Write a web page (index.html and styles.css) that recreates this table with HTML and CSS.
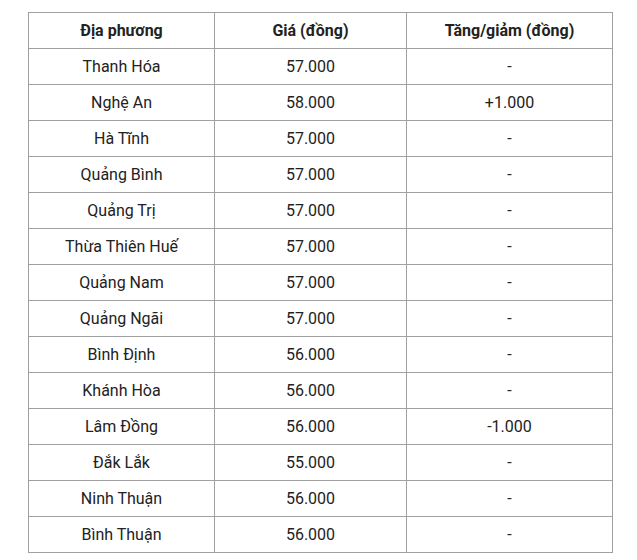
FILE: index.html
```html
<!DOCTYPE html>
<html lang="vi">
<head>
<meta charset="utf-8">
<link rel="stylesheet" href="styles.css">
</head>
<body>
<table class="price">
  <colgroup><col class="c1"><col class="c2"><col class="c3"></colgroup>
  <thead>
    <tr><th>Địa phương</th><th>Giá (đồng)</th><th>Tăng/giảm (đồng)</th></tr>
  </thead>
  <tbody>
    <tr><td>Thanh Hóa</td><td>57.000</td><td>-</td></tr>
    <tr><td>Nghệ An</td><td>58.000</td><td>+1.000</td></tr>
    <tr><td>Hà Tĩnh</td><td>57.000</td><td>-</td></tr>
    <tr><td>Quảng Bình</td><td>57.000</td><td>-</td></tr>
    <tr><td>Quảng Trị</td><td>57.000</td><td>-</td></tr>
    <tr><td>Thừa Thiên Huế</td><td>57.000</td><td>-</td></tr>
    <tr><td>Quảng Nam</td><td>57.000</td><td>-</td></tr>
    <tr><td>Quảng Ngãi</td><td>57.000</td><td>-</td></tr>
    <tr><td>Bình Định</td><td>56.000</td><td>-</td></tr>
    <tr><td>Khánh Hòa</td><td>56.000</td><td>-</td></tr>
    <tr><td>Lâm Đồng</td><td>56.000</td><td>-1.000</td></tr>
    <tr><td>Đắk Lắk</td><td>55.000</td><td>-</td></tr>
    <tr><td>Ninh Thuận</td><td>56.000</td><td>-</td></tr>
    <tr><td>Bình Thuận</td><td>56.000</td><td>-</td></tr>
  </tbody>
</table>
</body>
</html>
```
FILE: styles.css
```css
html, body {
  margin: 0;
  padding: 0;
  background: #fff;
}
body {
  padding: 12px 0 0 28px;
  font-family: Roboto, "Liberation Sans", sans-serif;
  font-size: 16px;
  color: #222;
}
.price {
  border-collapse: collapse;
  table-layout: fixed;
  width: 585px;
}
.c1 { width: 186px; }
.c2 { width: 192px; }
.c3 { width: 206px; }
.price th, .price td {
  border: 1px solid #a0a0a0;
  height: 35px;
  padding: 0;
  text-align: center;
  vertical-align: middle;
  line-height: 20px;
}
.price th {
  font-weight: 700;
}
```
